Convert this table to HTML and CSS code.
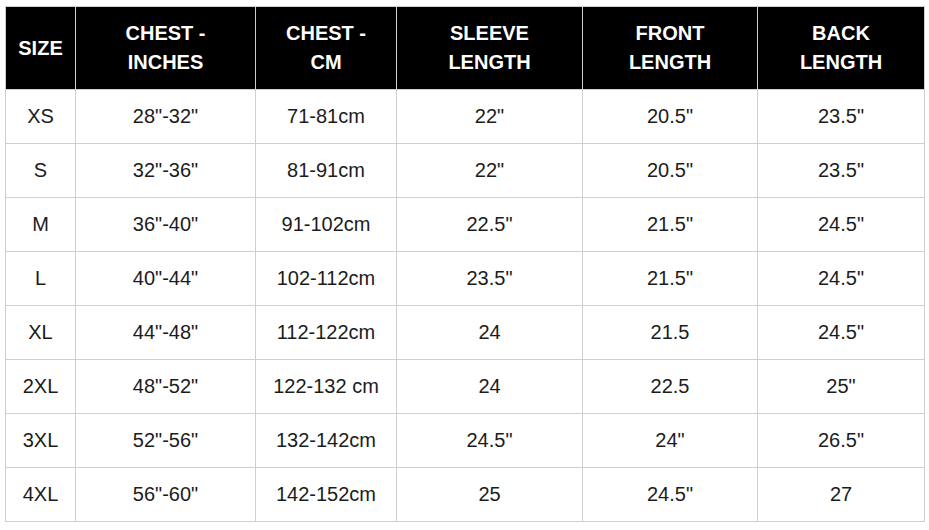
FILE: index.html
```html
<!DOCTYPE html>
<html lang="en">
<head>
<meta charset="utf-8">
<title>Size Chart</title>
<link rel="stylesheet" href="styles.css">
</head>
<body>
<table class="chart">
  <colgroup>
    <col class="c1"><col class="c2"><col class="c3"><col class="c4"><col class="c5"><col class="c6">
  </colgroup>
  <thead>
    <tr>
      <th>SIZE</th>
      <th>CHEST -<br>INCHES</th>
      <th>CHEST -<br>CM</th>
      <th>SLEEVE<br>LENGTH</th>
      <th>FRONT<br>LENGTH</th>
      <th>BACK<br>LENGTH</th>
    </tr>
  </thead>
  <tbody>
    <tr><td>XS</td><td>28"-32"</td><td>71-81cm</td><td>22"</td><td>20.5"</td><td>23.5"</td></tr>
    <tr><td>S</td><td>32"-36"</td><td>81-91cm</td><td>22"</td><td>20.5"</td><td>23.5"</td></tr>
    <tr><td>M</td><td>36"-40"</td><td>91-102cm</td><td>22.5"</td><td>21.5"</td><td>24.5"</td></tr>
    <tr><td>L</td><td>40"-44"</td><td>102-112cm</td><td>23.5"</td><td>21.5"</td><td>24.5"</td></tr>
    <tr><td>XL</td><td>44"-48"</td><td>112-122cm</td><td>24</td><td>21.5</td><td>24.5"</td></tr>
    <tr><td>2XL</td><td>48"-52"</td><td>122-132 cm</td><td>24</td><td>22.5</td><td>25"</td></tr>
    <tr><td>3XL</td><td>52"-56"</td><td>132-142cm</td><td>24.5"</td><td>24"</td><td>26.5"</td></tr>
    <tr><td>4XL</td><td>56"-60"</td><td>142-152cm</td><td>25</td><td>24.5"</td><td>27</td></tr>
  </tbody>
</table>
</body>
</html>
```

FILE: styles.css
```css
html, body {
  background: #ffffff;
}
body {
  margin: 0;
  padding: 6px 0 0 5px;
  font-family: "Liberation Sans", Arial, sans-serif;
}
.chart {
  border-collapse: collapse;
  table-layout: fixed;
  width: 919px;
}
.c1 { width: 70px; }
.c2 { width: 180px; }
.c3 { width: 141px; }
.c4 { width: 186px; }
.c5 { width: 175px; }
.c6 { width: 167px; }
.chart th,
.chart td {
  border: 1px solid #cfcfcf;
  text-align: center;
  vertical-align: middle;
  padding: 0;
}
.chart th {
  background: #000000;
  color: #ffffff;
  font-weight: bold;
  font-size: 20px;
  line-height: 29px;
  height: 82px;
}
.chart td {
  color: #1c1c1c;
  font-size: 20px;
  height: 53px;
}
```
